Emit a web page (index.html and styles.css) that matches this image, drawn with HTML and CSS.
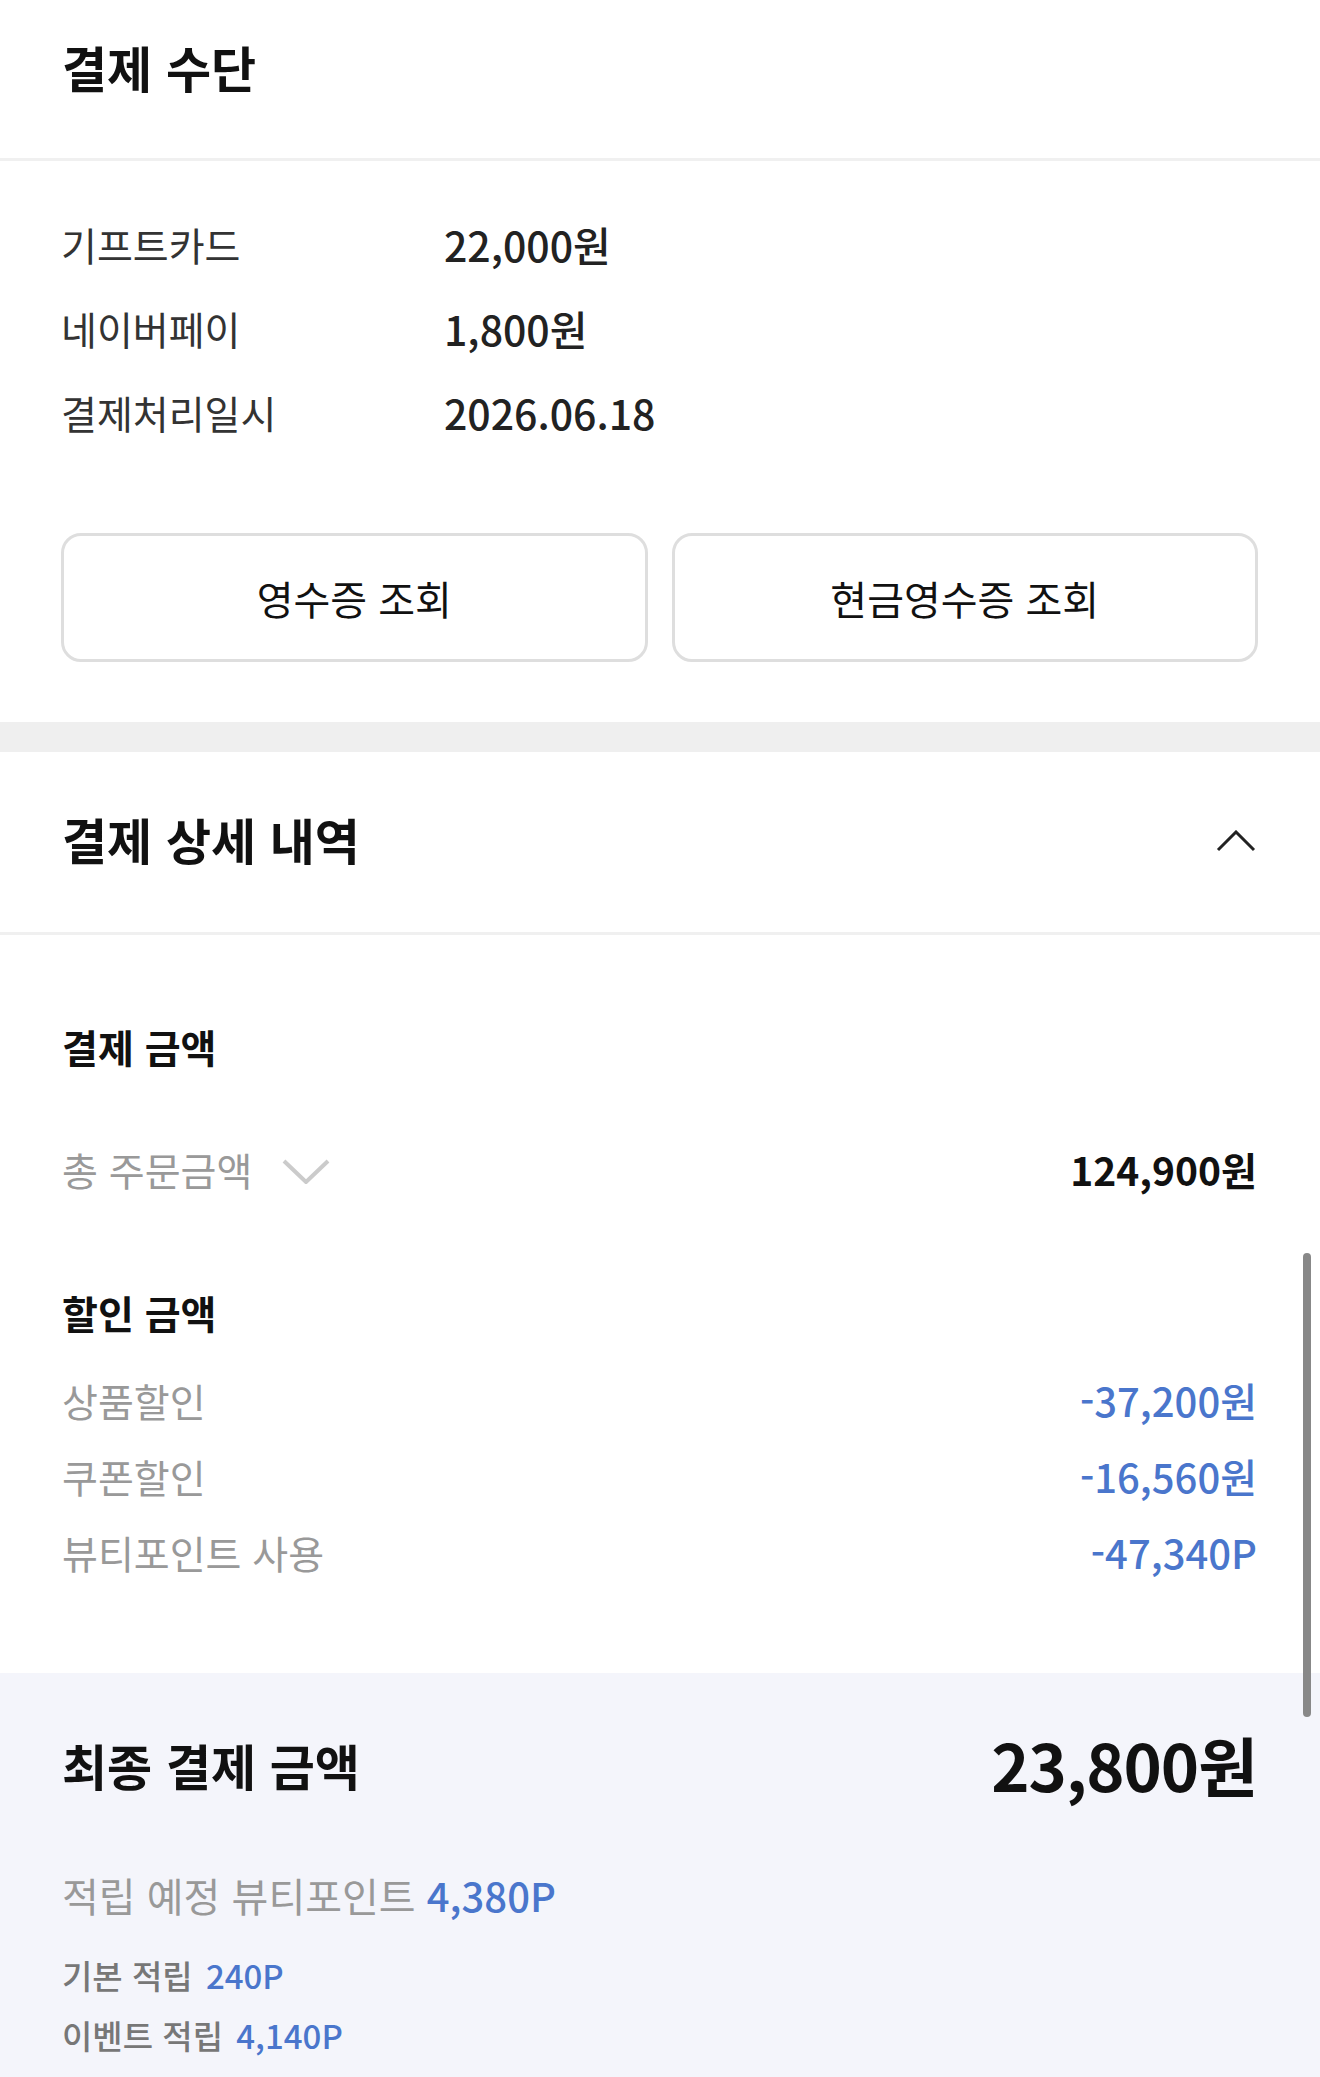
FILE: index.html
```html
<!DOCTYPE html>
<html lang="ko">
<head>
    <meta charset="UTF-8">
    <meta name="viewport" content="width=device-width, initial-scale=1.0">
    <title>결제 정보</title>

    <link rel="stylesheet" href="styles.css">
</head>
<body>
  <div class="page">

    <section class="method">
      <div class="method-head">
        <h2 class="head-title">결제 수단</h2>
      </div>

      <div class="method-body">
        <div class="info-row">
          <span class="info-label">기프트카드</span>
          <span class="info-value">22,000원</span>
        </div>
        <div class="info-row">
          <span class="info-label">네이버페이</span>
          <span class="info-value">1,800원</span>
        </div>
        <div class="info-row">
          <span class="info-label">결제처리일시</span>
          <span class="info-value">2026.06.18</span>
        </div>

        <div class="btns">
          <button class="btn">영수증 조회</button>
          <button class="btn">현금영수증 조회</button>
        </div>
      </div>
    </section>

    <div class="gap"></div>

    <section class="detail">
      <div class="detail-head">
        <h2 class="head-title">결제 상세 내역</h2>
        <svg class="arrow-up" width="40" height="22" viewBox="0 0 40 22">
          <polyline points="2,20 20,2 38,20" fill="none" stroke="#222" stroke-width="3"/>
        </svg>
      </div>

      <div class="detail-body">
        <h3 class="sub-title">결제 금액</h3>
        <div class="sum-row">
          <span class="sum-label">총 주문금액
            <svg class="arrow-down" width="48" height="26" viewBox="0 0 48 26">
              <polyline points="2,3 24,24 46,3" fill="none" stroke="#cbcbcb" stroke-width="4"/>
            </svg>
          </span>
          <span class="sum-value">124,900원</span>
        </div>

        <h3 class="sub-title sub-discount">할인 금액</h3>
        <div class="disc-list">
          <div class="disc-row">
            <span class="disc-label">상품할인</span>
            <span class="disc-value">-37,200원</span>
          </div>
          <div class="disc-row">
            <span class="disc-label">쿠폰할인</span>
            <span class="disc-value">-16,560원</span>
          </div>
          <div class="disc-row">
            <span class="disc-label">뷰티포인트 사용</span>
            <span class="disc-value">-47,340P</span>
          </div>
        </div>
      </div>

      <div class="final">
        <div class="final-row">
          <span class="final-label">최종 결제 금액</span>
          <span class="final-value">23,800원</span>
        </div>

        <p class="point-total">적립 예정 뷰티포인트 <b>4,380P</b></p>
        <div class="point-list">
          <p class="point-item">기본 적립 <b>240P</b></p>
          <p class="point-item">이벤트 적립 <b>4,140P</b></p>
        </div>
      </div>
    </section>

    <div class="scroll-bar"></div>
  </div>
</body>
</html>
```

FILE: styles.css
```css
*{
  margin: 0;
  padding: 0;
  box-sizing: border-box;
}

body{
  background-color: white;
  font-family: "Noto Sans CJK KR", "Noto Sans", sans-serif;
  color: #111;
}

.page{
  position: relative;
  width: 1320px;
  overflow: hidden;
}

.head-title{
  font-size: 49px;
  font-weight: 700;
  color: #111;
}

/* 결제 수단 */
.method-head{
  height: 161px;
  padding: 0 62px 26px 62px;
  display: flex;
  align-items: center;
  border-bottom: 3px solid #f0f0f0;
}

.method-body{
  padding: 41px 62px 60px 61px;
}

.info-row{
  display: flex;
  height: 84px;
  align-items: center;
}

.info-label{
  width: 383px;
  font-size: 39px;
  font-weight: 400;
  color: #333;
}

.info-value{
  font-size: 41px;
  font-weight: 500;
  color: #222;
}

.btns{
  display: flex;
  gap: 24px;
  margin-top: 79px;
}

.btn{
  flex: 1;
  height: 129px;
  border: 3px solid #dedede;
  border-radius: 20px;
  background-color: white;
  font-family: "Noto Sans CJK KR", "Noto Sans", sans-serif;
  font-size: 40px;
  font-weight: 400;
  color: #111;
}

.gap{
  height: 30px;
  background-color: #efefef;
}

/* 결제 상세 내역 */
.detail-head{
  height: 183px;
  padding: 0 64px 8px 62px;
  display: flex;
  align-items: center;
  justify-content: space-between;
  border-bottom: 3px solid #f0f0f0;
}

.arrow-up{
  display: block;
  margin-top: 6px;
}

.detail-body{
  padding: 86px 63px 83px 62px;
}

.sub-title{
  font-size: 39px;
  font-weight: 700;
  line-height: 50px;
  color: #111;
}

.sum-row{
  display: flex;
  justify-content: space-between;
  align-items: center;
  height: 60px;
  margin-top: 68px;
}

.sum-label{
  display: flex;
  align-items: center;
  font-size: 39px;
  color: #999;
}

.arrow-down{
  margin-left: 30px;
  margin-top: 4px;
}

.sum-value{
  font-size: 39px;
  font-weight: 700;
  color: #111;
}

.sub-discount{
  margin-top: 88px;
}

.disc-list{
  margin-top: 25px;
}

.disc-row{
  display: flex;
  justify-content: space-between;
  align-items: center;
  height: 76px;
}

.disc-label{
  font-size: 39px;
  color: #999;
}

.disc-value{
  font-size: 40px;
  font-weight: 500;
  color: #4a76cc;
}

/* 최종 결제 금액 */
.final{
  background-color: #f4f5fb;
  padding: 56px 63px 40px 62px;
}

.final-row{
  display: flex;
  justify-content: space-between;
  align-items: center;
  height: 70px;
}

.final-label{
  font-size: 49px;
  font-weight: 700;
  color: #111;
}

.final-value{
  font-size: 65px;
  font-weight: 700;
  color: #111;
  letter-spacing: -1px;
}

.point-total{
  margin-top: 71px;
  font-size: 40px;
  line-height: 50px;
  color: #999;
}

.point-total b{
  color: #4a76cc;
  font-weight: 500;
}

.point-list{
  margin-top: 25px;
}

.point-item{
  font-size: 33px;
  line-height: 60px;
  font-weight: 500;
  color: #777;
}

.point-item b{
  color: #4a76cc;
  font-weight: 500;
  margin-left: 4px;
}

.scroll-bar{
  position: absolute;
  left: 1303px;
  top: 1253px;
  width: 8px;
  height: 464px;
  border-radius: 4px;
  background-color: #888;
}
```
